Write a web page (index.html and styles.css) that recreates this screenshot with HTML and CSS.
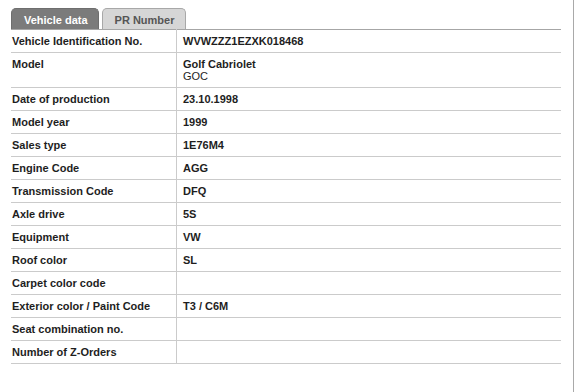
FILE: index.html
```html
<!DOCTYPE html>
<html>
<head>
<meta charset="utf-8">
<link rel="stylesheet" href="styles.css">
</head>
<body>
<div class="page">
  <div class="tabs">
    <div class="tab tab-active">Vehicle data</div>
    <div class="tab">PR Number</div>
  </div>
  <table class="data">
    <tr><th>Vehicle Identification No.</th><td>WVWZZZ1EZXK018468</td></tr>
    <tr><th>Model</th><td>Golf Cabriolet<br><span class="sub">GOC</span></td></tr>
    <tr><th>Date of production</th><td>23.10.1998</td></tr>
    <tr><th>Model year</th><td>1999</td></tr>
    <tr><th>Sales type</th><td>1E76M4</td></tr>
    <tr><th>Engine Code</th><td>AGG</td></tr>
    <tr><th>Transmission Code</th><td>DFQ</td></tr>
    <tr><th>Axle drive</th><td>5S</td></tr>
    <tr><th>Equipment</th><td>VW</td></tr>
    <tr><th>Roof color</th><td>SL</td></tr>
    <tr><th>Carpet color code</th><td></td></tr>
    <tr><th>Exterior color / Paint Code</th><td>T3 / C6M</td></tr>
    <tr><th>Seat combination no.</th><td></td></tr>
    <tr><th>Number of Z-Orders</th><td></td></tr>
  </table>
</div>
</body>
</html>
```

FILE: styles.css
```css
html, body {
  margin: 0;
  padding: 0;
  background: #fff;
}
body {
  font-family: "Liberation Sans", Arial, sans-serif;
  font-size: 11px;
  color: #1e1e1e;
}
.page {
  box-sizing: border-box;
  width: 574px;
  height: 392px;
  padding: 8px 0 0 11px;
  border-right: 1px solid #a9a9a9;
}
.tabs {
  display: flex;
  gap: 3px;
  height: 21px;
}
.tab {
  box-sizing: border-box;
  height: 21px;
  padding: 4px 10px 0 12px;
  border: 1px solid #a8a8a8;
  border-bottom: none;
  border-radius: 5px 5px 0 0;
  background: #d6d6d6;
  color: #555;
  font-weight: bold;
  font-size: 11px;
  line-height: 14px;
}
.tab-active {
  background: #7b7b7b;
  border-color: #6e6e6e;
  color: #fff;
}
.data {
  width: 550px;
  border-collapse: collapse;
  border-top: 1px solid #a6a6a6;
}
.data th, .data td {
  padding: 5px 2px 5px 1px;
  line-height: 12px;
  font-weight: bold;
  text-align: left;
  vertical-align: top;
  border-bottom: 1px solid #cbcbcb;
  font-size: 11px;
}
.data th {
  width: 162px;
  border-right: 1px solid #cbcbcb;
}
.data td {
  padding-left: 6px;
}
.data .sub {
  font-weight: normal;
}
```
